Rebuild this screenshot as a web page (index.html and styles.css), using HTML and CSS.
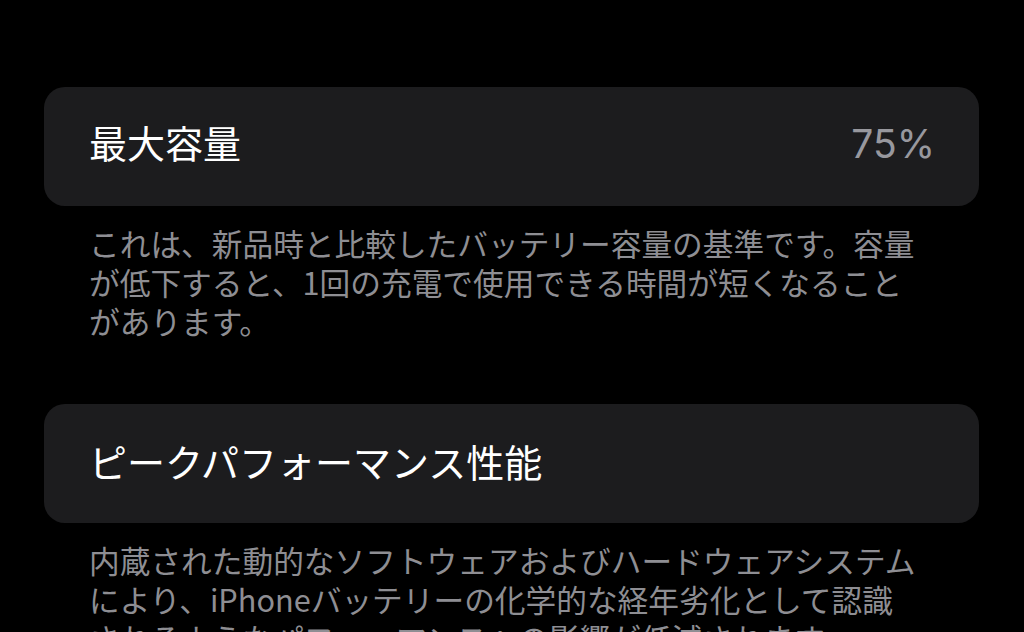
FILE: index.html
```html
<!DOCTYPE html>
<html lang="ja">
<head>
<meta charset="utf-8">
<link rel="stylesheet" href="styles.css">
</head>
<body>
<main class="page">
  <section class="group">
    <div class="card">
      <div class="row">
        <span class="title">最大容量</span>
        <span class="value">75%</span>
      </div>
    </div>
    <p class="note">これは、新品時と比較したバッテリー容量の基準です。容量<br>が低下すると、1回の充電で使用できる時間が短くなること<br>があります。</p>
  </section>
  <section class="group">
    <div class="card">
      <div class="row">
        <span class="title">ピークパフォーマンス性能</span>
      </div>
    </div>
    <p class="note">内蔵された動的なソフトウェアおよびハードウェアシステム<br>により、iPhoneバッテリーの化学的な経年劣化として認識<br>されるようなパフォーマンスへの影響が低減されます。</p>
  </section>
</main>
</body>
</html>
```

FILE: styles.css
```css
html, body {
  margin: 0;
  padding: 0;
  background: #000;
  height: 100%;
  overflow: hidden;
}
body {
  font-family: "Noto Sans CJK JP", "Noto Sans", sans-serif;
  -webkit-font-smoothing: antialiased;
}
.page {
  display: flex;
  flex-direction: column;
  gap: 64px;
  padding: 87px 45px 0 44px;
}
.group {
  display: flex;
  flex-direction: column;
}
.card {
  background: #1c1c1e;
  border-radius: 21px;
  height: 119px;
  display: flex;
  align-items: center;
  padding: 0 44px 6px 45px;
  box-sizing: border-box;
}
.row {
  flex: 1;
  display: flex;
  align-items: baseline;
  justify-content: space-between;
}
.title {
  color: #fff;
  font-size: 38px;
  line-height: 1.2;
}
.value {
  color: #98989e;
  font-family: Inter, "Noto Sans", sans-serif;
  font-size: 39px;
  line-height: 1.2;
}
.note {
  margin: 17px 0 0 45px;
  color: #8e8e93;
  font-size: 30.7px;
  line-height: 39px;
}
```
